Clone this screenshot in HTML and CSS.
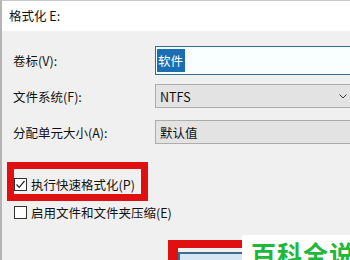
FILE: index.html
```html
<!DOCTYPE html>
<html>
<head>
<meta charset="utf-8">
<link rel="stylesheet" href="styles.css">
</head>
<body>
<div class="dialog">
  <div class="titlebar">格式化 E:</div>
  <div class="content">
    <div class="row row-first">
      <div class="label">卷标(V):</div>
      <div class="textbox"><span class="sel">软件</span></div>
    </div>
    <div class="row row-second">
      <div class="label">文件系统(F):</div>
      <div class="select"><span>NTFS</span><svg class="chev" width="8" height="5" viewBox="0 0 8 5"><path d="M0.5 0.5 L4 4 L7.5 0.5" fill="none" stroke="#333" stroke-width="1"/></svg></div>
    </div>
    <div class="row row-third">
      <div class="label">分配单元大小(A):</div>
      <div class="select"><span>默认值</span></div>
    </div>
    <div class="check check-first">
      <span class="box"><svg width="11" height="11" viewBox="0 0 11 11"><path d="M1.5 5.5 L4.2 8.3 L9.5 2" fill="none" stroke="#222" stroke-width="1.2"/></svg></span>
      <span>执行快速格式化(P)</span>
    </div>
    <div class="check check-second">
      <span class="box"></span>
      <span>启用文件和文件夹压缩(E)</span>
    </div>
    <div class="button-area">
      <div class="button"></div>
    </div>
  </div>
  <div class="mark mark-check"></div>
  <div class="mark mark-button"></div>
  <div class="watermark">百科全说</div>
</div>
</body>
</html>
```
FILE: styles.css
```css
html, body {
  margin: 0;
  padding: 0;
  width: 350px;
  height: 260px;
  overflow: hidden;
  background: #f0f0f0;
}
.dialog {
  position: relative;
  width: 350px;
  height: 260px;
  overflow: hidden;
  font-family: "Noto Sans CJK SC", "Noto Sans", sans-serif;
  font-size: 12px;
  color: #111;
  border-left: 2px solid #b4b4b4;
  border-top: 1px solid #c8c8c8;
  box-sizing: border-box;
}
.titlebar {
  height: 30px;
  line-height: 30px;
  background: #fff;
  padding-left: 7px;
  font-size: 12.5px;
}
.content {
  background: #f0f0f0;
  padding-top: 15px;
  padding-left: 11px;
}
.row {
  display: flex;
  align-items: center;
}
.row-second { margin-top: 9px; }
.row-third { margin-top: 12px; }
.label {
  width: 142px;
  flex: none;
  font-size: 12.5px;
}
.textbox {
  flex: none;
  width: 210px;
  height: 29px;
  box-sizing: border-box;
  border: 1px solid #2f7287;
  background: #f9ffff;
  display: flex;
  align-items: center;
  padding-left: 1px;
}
.sel {
  background: #1a6fb4;
  color: #fff;
  font-size: 12.5px;
  line-height: 23px;
  padding: 0 2px 0 1px;
}
.select {
  flex: none;
  width: 200px;
  height: 24px;
  box-sizing: border-box;
  border: 1px solid #adadad;
  background: #e3e3e3;
  display: flex;
  align-items: center;
  justify-content: space-between;
  padding: 0 7px 0 4px;
  font-size: 12.5px;
}
.chev { display: block; }
.check {
  display: flex;
  align-items: center;
  gap: 4px;
  padding-left: 1px;
  font-size: 12.5px;
  height: 13px;
}
.check-first { margin-top: 34px; }
.check-second { margin-top: 15px; }
.box {
  width: 13px;
  height: 13px;
  box-sizing: border-box;
  border: 1px solid #333;
  background: #fff;
  display: flex;
  align-items: center;
  justify-content: center;
  flex: none;
}
.box svg { display: block; }
.button-area {
  margin-top: 33px;
  padding-left: 165px;
}
.button {
  width: 90px;
  height: 24px;
  border: 2px solid #3d6c8c;
  background: #d6e6f2;
  box-sizing: border-box;
}
.mark {
  position: absolute;
  border: 7px solid #e01010;
  box-sizing: border-box;
}
.mark-check {
  left: 5px;
  top: 161px;
  width: 141px;
  height: 39px;
}
.mark-button {
  left: 166px;
  top: 239px;
  width: 110px;
  height: 40px;
  border-width: 8px 8px 8px 10px;
}
.watermark {
  position: absolute;
  left: 240px;
  top: 234px;
  width: 120px;
  height: 40px;
  background: #fff;
  color: #1fb83a;
  font-size: 25px;
  font-weight: 700;
  line-height: 36px;
  padding-left: 9px;
  padding-top: 0;
  letter-spacing: 1px;
  box-sizing: border-box;
}
```
